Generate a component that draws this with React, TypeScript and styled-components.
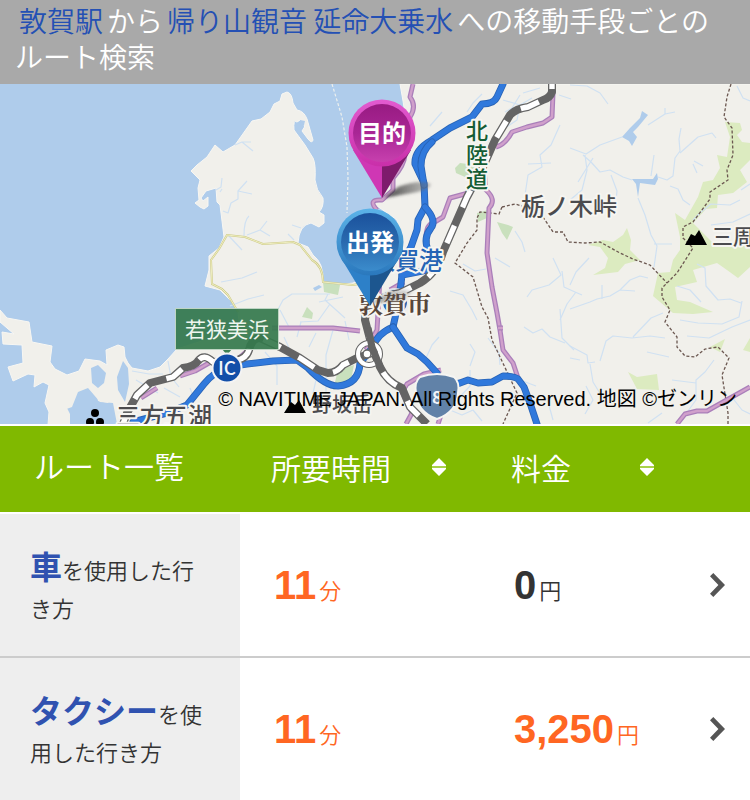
import React from "react";
import styled, { createGlobalStyle, css } from "styled-components";

const GlobalStyle = createGlobalStyle`
  body {
    margin: 0;
    background: #fff;
    color: #333;
    font-family: "Liberation Sans", "Noto Sans CJK JP", sans-serif;
  }
  *, *::before, *::after { box-sizing: border-box; }
`;

const Heading = styled.h1`
  margin: 0;
  padding: 2px 15px 10px;
  background: #a9a9a9;
  color: #fff;
  font-family: "Noto Sans CJK JP", sans-serif;
  font-size: 28px;
  font-weight: 350;
  line-height: 36px;
`;

const PlaceLink = styled.a`
  margin: 0 4px;
  color: #2450b4;
  text-decoration: none;
`;

const MapFigure = styled.figure`
  position: relative;
  margin: 0;
  overflow: hidden;
  border-bottom: 2px solid #fff;
`;

const MapDrawing = styled.svg`
  display: block;
  width: 100%;
  height: auto;
`;

const Copyright = styled.figcaption`
  position: absolute;
  right: 13px;
  bottom: 12px;
  color: #000;
  font-size: 20px;
  line-height: 26px;
  font-weight: 400;
  white-space: nowrap;
`;

const RouteTable = styled.table`
  width: 100%;
  table-layout: fixed;
  border-collapse: collapse;
`;

const MethodCol = styled.col`
  width: 32%;
`;
const TimeCol = styled.col`
  width: 32%;
`;
const PriceCol = styled.col`
  width: 26%;
`;
const LinkCol = styled.col`
  width: 10%;
`;

const HeadRow = styled.tr`
  height: 87px;
  background: #80b900;
  color: #fff;
  font-family: "Noto Sans CJK JP", sans-serif;
  font-size: 30px;
  line-height: 44px;
`;

const HeadCell = styled.th<{ $raised?: boolean }>`
  padding: ${(p) => (p.$raised ? "0 0 8px 34px" : "0 0 4px")};
  font-weight: 350;
  text-align: left;
  white-space: nowrap;
`;

const SortButton = styled.button`
  display: flex;
  align-items: center;
  justify-content: space-between;
  width: 100%;
  padding: 0 20px 0 31px;
  border: 0;
  background: none;
  color: inherit;
  font: inherit;
  cursor: pointer;
`;

const TimeSortButton = styled(SortButton)`
  padding-right: 33px;
`;

const BodyRow = styled.tr`
  height: 144px;
  border-bottom: 2px solid #ccc;

  &:first-child {
    border-top: 2px solid #fff;
  }
`;

const MethodCell = styled.th`
  padding: 2px 30px 0;
  background: #eee;
  font-family: "Noto Sans CJK JP", sans-serif;
  font-size: 22px;
  font-weight: 350;
  line-height: 38px;
  text-align: left;
  word-break: break-all;
`;

const MethodLink = styled.a`
  color: #3052b0;
  font-size: 32px;
  font-weight: 700;
  text-decoration: none;
`;

const ValueCell = styled.td<{ $highlight?: boolean }>`
  padding: 0 0 0 34px;
  white-space: nowrap;
  ${(p) =>
    p.$highlight &&
    css`
      color: #ff6622;
    `}
`;

const Amount = styled.span`
  font-size: 40px;
  font-weight: 700;
  line-height: 48px;
`;

const Unit = styled.span`
  margin-left: 3px;
  font-family: "Noto Sans CJK JP", sans-serif;
  font-size: 22px;
  font-weight: 350;
  line-height: 24px;
`;

const DetailCell = styled.td`
  padding: 0 25px 0 0;
`;

const DetailLink = styled.a`
  display: flex;
  justify-content: flex-end;
  color: #555;
`;

const SortIcon = () => (
  <svg width="16" height="18" viewBox="0 0 16 18" aria-hidden="true">
    <path d="M8 0 15 7V8H1V7ZM8 18 15 11V10H1V11Z" fill="#fff" />
    <path d="M1 9H15" stroke="#a9d24a" strokeWidth="2" />
  </svg>
);

const Chevron = () => (
  <svg width="15" height="24" viewBox="0 0 15 24" aria-hidden="true">
    <path d="M3.3 0 15 12 3.3 24 0 20.7 8.4 12 0 3.3Z" fill="currentColor" />
  </svg>
);

const highways = [
  "M503 84 497 97Q494 104 482 104L472 117 450 128 432 140Q414 150 415 164L424 183 425 207 418 220 417 230 411 247 402 262V275",
  "M432 142Q421 151 421 166L424 185",
  "M425 207Q437 220 431 228 423 238 428 250",
  "M402 275Q413 273 427 270M402 275 400 292 395 318 393 327",
  "M393 327Q377 334 373 347L360 363Q359 384 338 386 325 386 308 368L297 360 273 361 247 364 227 367Q215 371 204 384L187 405 167 413 133 422",
  "M393 327 407 348 418 354 427 362 437 373",
  "M437 388 460 383 468 380 478 383 492 382 503 376Q514 376 518 379L524 387 530 403 537 424",
];

const railways = [
  "M552 84V92Q550 98 543 100L528 107Q515 109 510 115L495 140 483 167 467 197 443 252Q437 273 420 283L400 293Q375 298 366 310L365 320 372 347 380 367Q387 382 402 388L410 407 427 424",
  "M372 353 357 358 343 365Q337 373 328 373L318 370 300 358 280 347 260 338Q252 338 249 350 246 360 232 361L213 362Q204 353 198 361 195 366 183 368L173 377 150 383 137 395 127 413 123 424",
];

const localRoads = [
  "M413 84 410 97Q417 106 410 117L405 155Q404 166 393 178L393 190 382 200Q367 199 377 210",
  "M553 93 552 117 543 123 527 127 512 132Q505 145 496 147M472 192 450 198 443 217 433 223Q426 225 426 238",
  "M483 160 486 190Q497 200 489 208L487 253 492 287 497 313 500 330 503 350 513 363 518 378",
  "M498 328H503M272 328H333L360 331M380 277 377 330 366 350M404 282 390 290",
  "M441 370 424 374 407 384 402 392 412 413 406 424M441 415 438 424",
  "M677 424 685 414 697 411 707 411 750 387",
  "M247 351 237 360M209 363 195 371 180 376M157 388 141 398",
];

const boundaries = [
  "M731 84 727 97 724 117 732 128 733 155 727 170 728 180 710 192 710 199 693 222 683 227 683 238 693 248 677 273 662 288V297L670 310 665 322 677 337V347L685 356 695 357 705 349 718 347 729 358 722 375 728 413V424",
  "M502 207 515 204 522 206M543 217 553 232 563 232 568 242 585 243 600 242 620 253 633 259 650 265 667 283",
  "M502 207 499 214 480 212 477 218V230L467 243 455 263 473 277 482 307 488 318 492 340 517 393 503 424",
];

const streams = [
  "M235 145 242 142H251M242 142 253 151M222 189 220 192M222 178 221 187 216 190M223 211 228 213 231 203 238 199V191L247 181M238 191 252 194M244 236Q244 220 249 216M247 235 260 230 267 221M260 230 270 236M228 235 242 250M292 225 301 228M288 234 294 240",
  "M221 282 242 278 257 272M230 306 248 299 264 295M275 315 283 300 292 294H330M345 318 325 300 328 294M290 329 280 310M330 304 318 321 300 322M343 297 319 302",
  "M250 319 270 325 260 338M265 352 277 366V385M284 337 290 350M301 322 297 337M316 333 309 347M333 330 326 355V405M316 380 311 402M345 321 349 340",
  "M132 371 149 374 163 374M139 389 167 376M168 361 171 377 179 387M164 388 180 397M190 388 194 399M205 353 208 364M136 380 158 393",
  "M430 126 442 112M482 94 473 103 467 112M503 100 520 105 532 98M520 105 517 120 505 128M540 88 523 93M559 95 571 99",
  "M570 85 587 86 600 93 608 104M570 148 586 154 600 145 622 137M648 125 665 114 675 112M665 114 665 108M583 155 591 162 600 172 610 170 623 177 632 180M585 155 587 170 582 190 570 200M593 158 578 182M611 175 617 191 615 210",
  "M658 177 667 180 673 176 675 158 680 151 679 139 681 128M680 153 698 137 712 133 716 138M694 161 703 166M693 164 697 173M670 186 678 189 683 200 690 205M651 176 654 155M638 198 645 215 651 235 657 246 654 267M654 244 672 244",
  "M560 125 551 145 540 155 542 167 528 175 525 195M551 163 528 164M515 231 522 242 525 252M553 258 561 275 549 285 532 290 527 297M463 264 475 271 486 269M450 291 463 295 472 310 477 320M439 337 432 345 426 358",
  "M570 309 590 302 597 299 610 296 620 290 635 291M602 299V285M620 290 630 280 640 276 648 278M570 285 576 272 589 258M562 271 564 287 575 292 582 295M576 292 567 304 560 320M560 309 562 338 574 350",
  "M524 327 533 333 542 329 550 337 565 343M470 344 475 352 470 366M488 338 499 353 500 365M600 361 606 341 613 336 632 338 650 336 665 338M633 337 651 318 663 313M647 352 669 357M595 362 588 363 587 355 570 346M590 364 593 382 601 395",
  "M697 264 705 268 706 286 718 300 730 299 741 303M677 286 690 290 701 302M742 301 739 317 722 324 698 323 680 320M687 336 709 338 732 327 750 320M740 200 730 205 711 204 701 212 693 220M750 214 733 222 711 225M750 184 741 190",
  "M737 86 743 98 750 101M714 360 705 372 696 380 696 400 688 411M696 383 672 380M662 413 648 423M731 396 742 410 750 414M547 398 553 420M520 380 536 386",
  "M470 370V386L454 403M510 267 495 258M570 358 580 360",
  "M450 410 462 415 473 410 482 421M586 386 593 400 585 414M520 95 512 108 505 112",
];

const mapFont = '"Noto Sans CJK JP", sans-serif';

const labelProps = {
  fontFamily: mapFont,
  fontWeight: 500,
  stroke: "#f6f5f1",
  strokeWidth: 4,
  strokeLinejoin: "round" as const,
  paintOrder: "stroke",
};

function RouteMap() {
  return (
    <MapDrawing viewBox="0 84 750 340" role="img" aria-label="敦賀駅周辺の地図">
      <defs>
        <linearGradient id="goalFace" x1="0" y1="0" x2="0" y2="1">
          <stop offset="0" stopColor="#981b82" />
          <stop offset="0.5" stopColor="#a92695" />
          <stop offset="1" stopColor="#c740ae" />
        </linearGradient>
        <linearGradient id="goalRim" x1="0" y1="0" x2="0" y2="1">
          <stop offset="0" stopColor="#e25bd0" />
          <stop offset="1" stopColor="#c92fa9" />
        </linearGradient>
        <linearGradient id="startFace" x1="0" y1="0" x2="0" y2="1">
          <stop offset="0" stopColor="#1b519c" />
          <stop offset="0.5" stopColor="#296aaf" />
          <stop offset="1" stopColor="#3b8ccc" />
        </linearGradient>
        <linearGradient id="startRim" x1="0" y1="0" x2="0" y2="1">
          <stop offset="0" stopColor="#5cb3e8" />
          <stop offset="1" stopColor="#2a78bd" />
        </linearGradient>
        <linearGradient id="pinShadow">
          <stop offset="0" stopColor="#222" stopOpacity="0.85" />
          <stop offset="1" stopColor="#777" stopOpacity="0.4" />
        </linearGradient>
        <filter id="soften" x="-20%" y="-50%" width="140%" height="200%">
          <feGaussianBlur stdDeviation="1.5" />
        </filter>
      </defs>

      <rect y="84" width="750" height="340" fill="#afcceb" />
      <g fill="#f1f0eb" stroke="#f8f7f3" strokeWidth="1">
        <path d="M287 92Q292 93 293 103L297 110Q304 111 307 119L313 140Q312 144 308 139L302 131Q306 127 304 123 302 118 297 122 293 119 294 130L305 145 313 158Q316 164 315 180 316 190 323 198 324 207 319 212L324 215V223L319 227 311 223Q299 225 298 243L308 247 313 255Q324 263 323 282L330 286 353 283 365 278 380 258 404 262 397 220 380 208 371 203 382 199 389 177 409 139 403 101 400 84H751V425H48L49 412 45 403 49 385 43 382 34 387 35 375 28 374 13 381 8 367 23 363 22 345 3 344 2 332 14 334 0 322V310L7 318 29 322 32 342 52 346 50 362 55 369 67 375 79 371 85 359 100 361 107 365 106 350 118 345 124 347 125 357 128 363 132 368 148 371 160 367 168 359 177 349 205 340 239 322 238 312 232 302 220 290 205 286 209 270V256L219 248 224 237 220 205 217 202 216 188 206 191 201 198 203 201 208 197V206L204 209 200 207 195 203 199 200 198 188 200 180 191 171 197 165 207 157 215 145 223 152 235 145 252 121 261 119 270 112 274 104 280 101 282 94Z" />
      </g>
      <g fill="#afcceb">
        <path d="M91 368 98 365 106 373 104 383 98 388 92 383ZM123 361 128 368 129 384 125 402 118 390 117 377ZM61 411 72 407 78 392 88 388 100 402 113 403 117 424H70Z" />
        <path d="M642 111 648 115 638 127 633 132 637 137 632 146 629 141 622 137 630 128 640 118ZM632 179 653 179 657 173 658 179 655 185 640 183 638 197 636 184ZM313 288 319 285 322 287 315 291Z" />
        <path d="M300 120 305 121 304 125 300 125Z" />
      </g>
      <g fill="#f1f0eb">
        <path d="M96 391 106 390 113 396 108 403 98 401ZM50 409 66 406 70 414 70 424H48Z" />
      </g>

      <g fill="#dcebc0">
        <path d="M725 122 740 123 742 130 737 135 742 142 750 143V160L740 170 747 182 733 193 718 195 717 208 706 209 693 223 707 237 717 247 750 243V267L738 278 727 270 717 263 693 270 697 282 675 287 677 300 690 302 713 312 693 314 673 313 653 296 658 273 670 272 673 260 680 250V237L675 213 685 220 698 197 703 182 713 180 720 168 717 155 727 157 730 137Z" />
        <path d="M588 245 603 240 613 242 623 235 627 228 631 240 630 250 640 260 625 264 618 272 593 275 605 268 608 258 600 247ZM628 372 637 377 657 374 659 390 637 389ZM710 347 725 339 720 352ZM750 338 743 350 750 352Z" />
        <path d="M455 168 460 163 475 165 478 175 465 177 456 173ZM477 213 488 210 487 218 478 222ZM497 222 508 225 513 227 507 240 502 233ZM323 282 340 285 338 295 324 292ZM302 317 307 307 313 313 312 319ZM354 365 338 370 333 390 350 385Z" fill="#c9e0bd" />
      </g>

      <g fill="none" stroke="#d0e1f2" strokeWidth="1.2" strokeLinejoin="round">
        {streams.map((d) => (
          <path key={d} d={d} />
        ))}
      </g>
      <path d="M332 84 342 117 347 147 348 177 347 213" fill="none" stroke="#edf0ee" strokeWidth="1.2" strokeDasharray="3 2" />
      <g fill="none" strokeLinejoin="round">
        <path d="M238 312 228 295 222 289 212 284 211 260 219 249 227 235 245 237 263 244 293 242 300 245 312 260Q323 266 323 282L353 285 369 282" stroke="#ceca88" strokeWidth="2" />
        <path d="M238 312 228 295 222 289 212 284 211 260 219 249 227 235 245 237 263 244 293 242 300 245 312 260Q323 266 323 282L353 285 369 282" stroke="#eeeec0" strokeWidth="1" />
      </g>
      <g fill="none" stroke="#6b5750" strokeWidth="1.3" strokeDasharray="3 2">
        {boundaries.map((d) => (
          <path key={d} d={d} />
        ))}
      </g>
      {localRoads.map((d) => (
        <g key={d} fill="none" strokeLinejoin="round">
          <path d={d} stroke="#aa7fba" strokeWidth="5" />
          <path d={d} stroke="#d0a0cb" strokeWidth="2.4" />
        </g>
      ))}
      {highways.map((d) => (
        <g key={d} fill="none" strokeLinejoin="round" strokeLinecap="round">
          <path d={d} stroke="#2863b5" strokeWidth="7" />
          <path d={d} stroke="#3079dc" strokeWidth="5.4" />
        </g>
      ))}
      <circle cx="395" cy="302" r="13" fill="#2465ae" stroke="#e7edf5" strokeWidth="2" />
      {railways.map((d) => (
        <g key={d} fill="none" strokeLinejoin="round">
          <path d={d} stroke="#646464" strokeWidth="8" />
          <path d={d} stroke="#fff" strokeWidth="5.4" strokeDasharray="19 20" strokeDashoffset="-25" />
        </g>
      ))}
      <circle cx="369" cy="354" r="11" fill="none" stroke="#646464" strokeWidth="6" />
      <circle cx="369" cy="354" r="11" fill="none" stroke="#fff" strokeWidth="4" />
      <circle cx="367" cy="354" r="4" fill="#fff" stroke="#646464" strokeWidth="1.5" />
      <path d="M368 328 372 347 380 367" stroke="#646464" strokeWidth="7" fill="none" />

      <g {...labelProps} fill="#145c34" fontSize="22" textAnchor="middle">
        <text x="477" y="139">北</text>
        <text x="477" y="163">陸</text>
        <text x="477" y="187">道</text>
      </g>
      <g {...labelProps} fill="#4b4b4e">
        <text x="521" y="215" fontSize="24">栃ノ木峠</text>
        <text x="712" y="244" fontSize="21">三周ヶ岳</text>
        <text x="116" y="425" fontSize="24">三方五湖</text>
        <text x="312" y="412" fontSize="20">野坂岳</text>
      </g>
      <text {...labelProps} x="371" y="269" fontSize="24" fill="#2564b5">敦賀港</text>
      <text {...labelProps} x="359" y="313" fontSize="24" fontWeight="700" fontFamily='"Noto Serif CJK JP", "Noto Sans CJK JP", serif' fill="#58463b">
        敦賀市
      </text>

      <g fill="#000">
        <path d="M685 245 691 234 695 236 699 230 707 245ZM284 413 291 402 295 405 299 400 306 413Z" />
        <circle cx="95" cy="413" r="4" />
        <circle cx="90" cy="422" r="4" />
        <circle cx="100" cy="422" r="4" />
      </g>
      <g>
        <path d="M222 349 227 355 232 349Z" fill="#3f8254" />
        <rect x="175.500" y="308.500" width="103" height="41" fill="#34784c" fillOpacity="0.92" stroke="#bfd5c4" />
        <text x="185" y="337" fontSize="21" fontFamily={mapFont} fill="#eef6ef">若狭美浜</text>
        <circle cx="227" cy="368" r="14.500" fill="#124fa9" stroke="#f4f4f4" strokeWidth="2" />
        <text x="227" y="375" fontSize="19" fontWeight="500" fontFamily={mapFont} fill="#f2f5fa" textAnchor="middle">IC</text>
      </g>
      <path d="M420 377Q437 371 454 377 460 382 458 393 457 412 437 419 417 412 416 393 414 382 420 377Z" fill="#6182a8" stroke="#f5f5f3" strokeWidth="2" />
      <text x="437" y="404" fontSize="17" fontWeight="700" fontFamily={mapFont} fill="#f2f5fa" textAnchor="middle">8</text>

      <path d="M384 198 398 187Q420 179 431 184 431 190 412 193Z" fill="url(#pinShadow)" filter="url(#soften)" />
      <path d="M372 303 388 292Q402 286 412 291 410 300 394 302Z" fill="url(#pinShadow)" filter="url(#soften)" opacity="0.5" />
      <path d="M353 150 382 198V150Z" fill="#cf37b4" />
      <path d="M382 150V198L411 150Z" fill="#7e1b6c" />
      <circle cx="382" cy="133" r="33.500" fill="url(#goalRim)" />
      <circle cx="382" cy="133" r="29" fill="url(#goalFace)" />
      <path d="M341 258 370 306V258Z" fill="#2d80c8" />
      <path d="M370 258V306L399 258Z" fill="#1c568f" />
      <circle cx="370" cy="242" r="33.500" fill="url(#startRim)" />
      <circle cx="370" cy="242" r="29" fill="url(#startFace)" />
      <g fontFamily={mapFont} fontSize="24" fontWeight="700" fill="#fff" textAnchor="middle">
        <text x="382" y="142">目的</text>
        <text x="370" y="251">出発</text>
      </g>
    </MapDrawing>
  );
}

type Route = { method: string; rest: string; minutes: string; price: string };

const routes: Route[] = [
  { method: "車", rest: "を使用した行き方", minutes: "11", price: "0" },
  { method: "タクシー", rest: "を使用した行き方", minutes: "11", price: "3,250" },
];

export default function App() {
  return (
    <main>
      <GlobalStyle />
      <Heading>
        <PlaceLink href="#departure">敦賀駅</PlaceLink>から
        <PlaceLink href="#destination">帰り山観音 延命大乗水</PlaceLink>
        への移動手段ごとのルート検索
      </Heading>
      <MapFigure>
        <RouteMap />
        <Copyright>© NAVITIME JAPAN. All Rights Reserved. 地図 ©ゼンリン</Copyright>
      </MapFigure>
      <RouteTable>
        <colgroup>
          <MethodCol />
          <TimeCol />
          <PriceCol />
          <LinkCol />
        </colgroup>
        <thead>
          <HeadRow>
            <HeadCell scope="col" $raised>ルート一覧</HeadCell>
            <HeadCell scope="col">
              <TimeSortButton type="button">
                所要時間
                <SortIcon />
              </TimeSortButton>
            </HeadCell>
            <HeadCell scope="col">
              <SortButton type="button">
                料金
                <SortIcon />
              </SortButton>
            </HeadCell>
            <HeadCell as="td" />
          </HeadRow>
        </thead>
        <tbody>
          {routes.map((route) => (
            <BodyRow key={route.method}>
              <MethodCell scope="row">
                <MethodLink href="#route">{route.method}</MethodLink>
                {route.rest}
              </MethodCell>
              <ValueCell $highlight>
                <Amount>{route.minutes}</Amount>
                <Unit>分</Unit>
              </ValueCell>
              <ValueCell $highlight={route.price !== "0"}>
                <Amount>{route.price}</Amount>
                <Unit>円</Unit>
              </ValueCell>
              <DetailCell>
                <DetailLink href="#route" aria-label={`${route.method}のルート詳細`}>
                  <Chevron />
                </DetailLink>
              </DetailCell>
            </BodyRow>
          ))}
        </tbody>
      </RouteTable>
    </main>
  );
}
